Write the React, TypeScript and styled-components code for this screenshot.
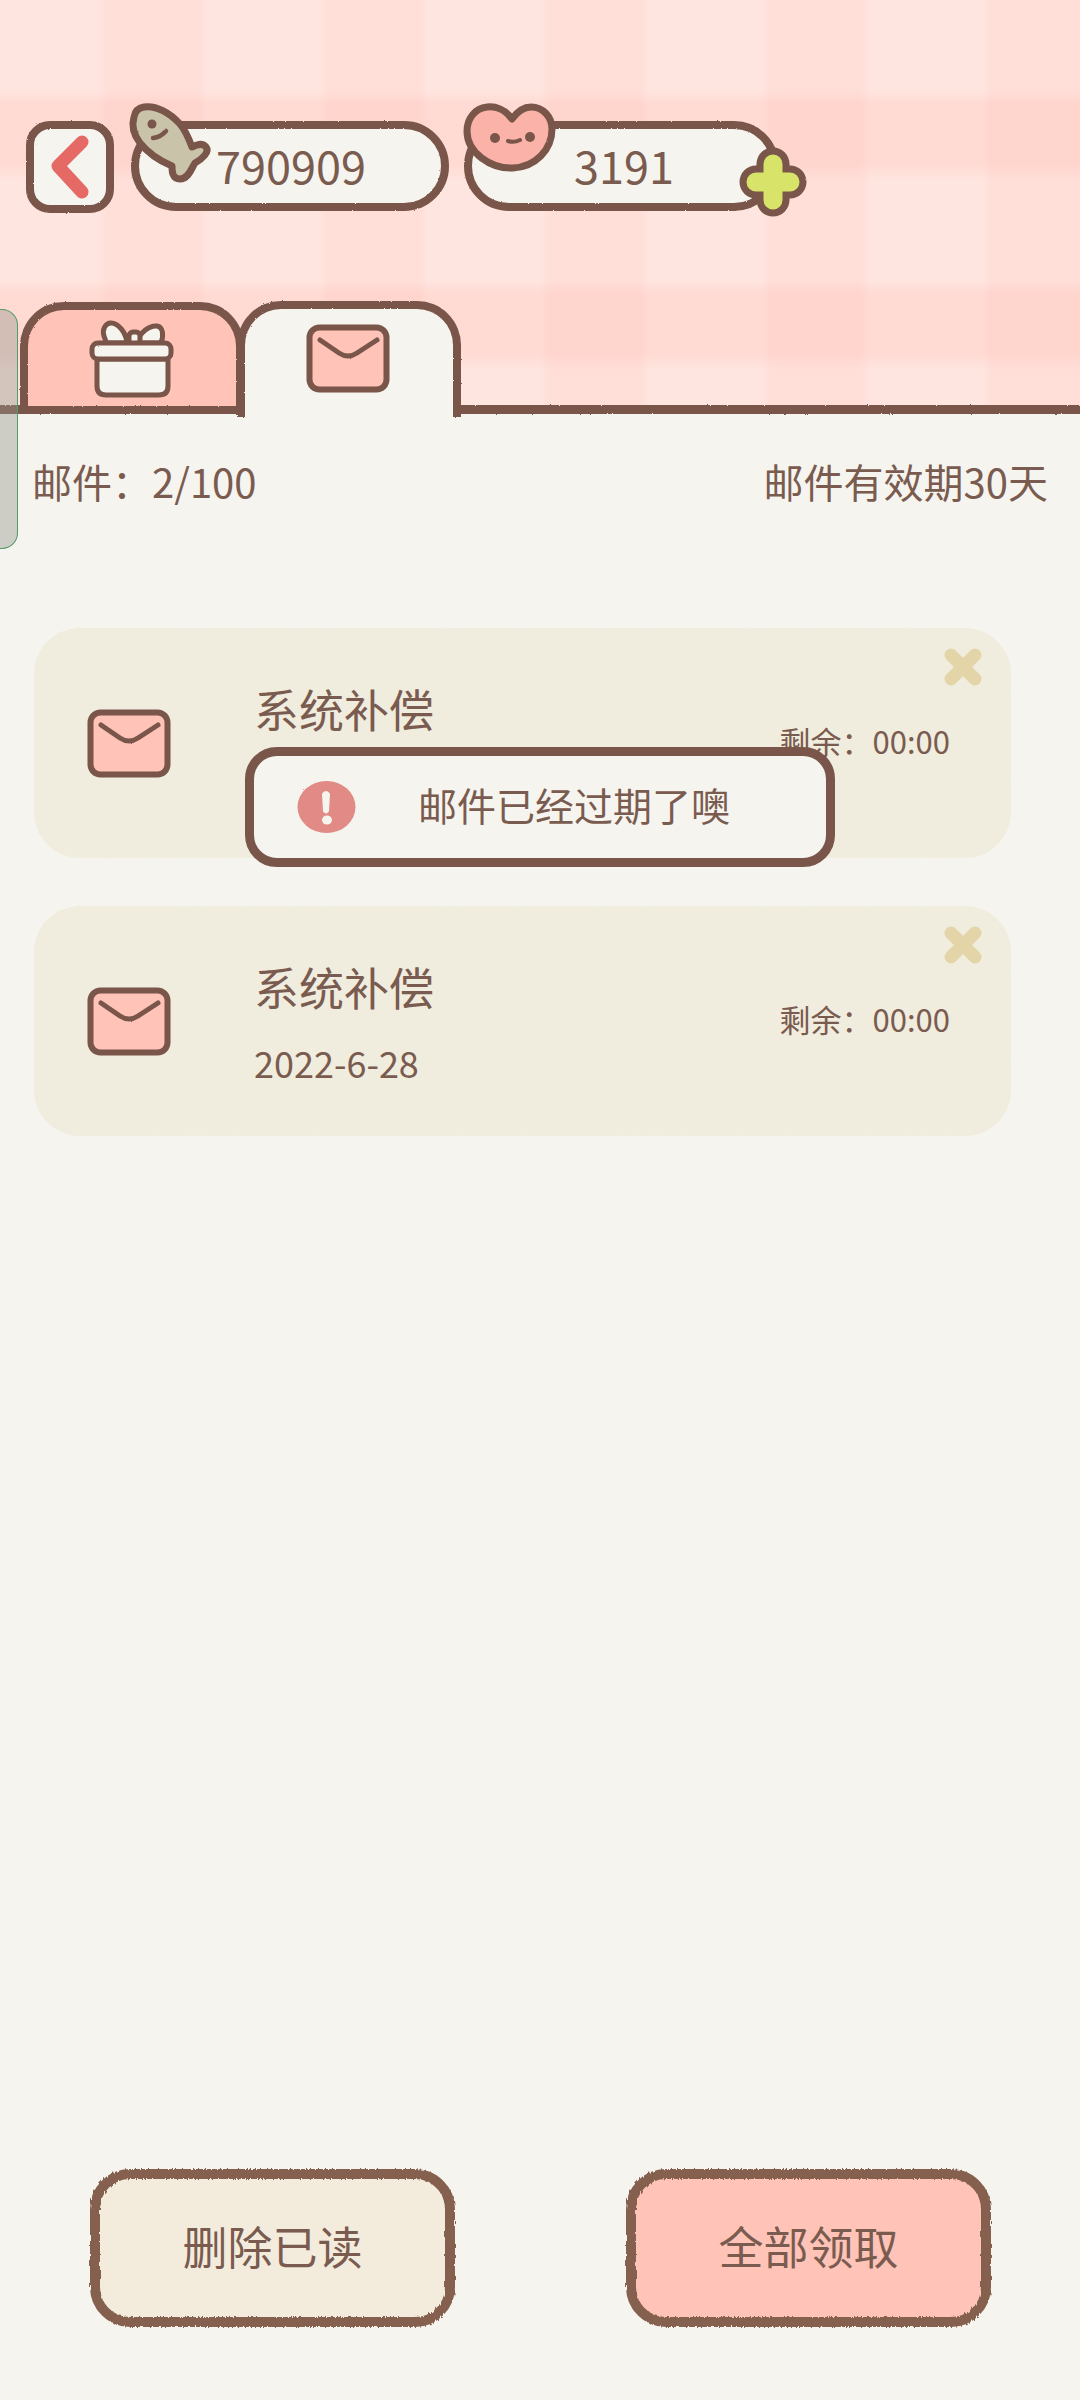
import React from "react";
import styled, { createGlobalStyle } from "styled-components";

const BROWN = "#7a5549";
const TEXT = "#7a5b4f";
const PAPER = "#f6f4ee";
const PINK = "#ffc3b8";

const Global = createGlobalStyle`
  html, body { margin: 0; padding: 0; background: ${PAPER}; }
  * { box-sizing: border-box; }
  #root { width: 1080px; height: 2400px; }
`;

const Page = styled.div`
  position: relative;
  width: 1080px;
  height: 2400px;
  display: flex;
  flex-direction: column;
  overflow: hidden;
  background: ${PAPER};
  color: ${TEXT};
  font-family: "Noto Sans CJK SC", "Noto Sans", sans-serif;
  font-weight: 400;
`;

const FilterDefs = styled.svg`
  position: absolute;
  width: 0;
  height: 0;
`;

const Header = styled.header`
  position: relative;
  height: 414px;
  flex: none;
  display: flex;
  flex-direction: column;
  padding-top: 121px;
  background-color: #ffe5df;
  background-image:
    linear-gradient(90deg, transparent 0, rgba(255, 165, 155, 0.1) 10px, rgba(255, 165, 155, 0.1) 100px, transparent 110px),
    linear-gradient(180deg, transparent 0, rgba(255, 165, 155, 0.16) 14px, rgba(255, 165, 155, 0.16) 74px, transparent 90px);
  background-size: 221px 100%, 100% 190px;
  background-position: 98px 0, 0 90px;
  &::after {
    content: "";
    position: absolute;
    left: -6px;
    right: -6px;
    bottom: 0;
    height: 9px;
    background: ${BROWN};
    filter: url(#rough);
  }
`;

const TopBar = styled.div`
  display: flex;
  align-items: flex-start;
  padding-left: 26px;
`;

const Outlined = styled.div`
  position: relative;
  isolation: isolate;
  &::before {
    content: "";
    position: absolute;
    inset: 0;
    z-index: -1;
    border: 8px solid ${BROWN};
    filter: url(#rough);
  }
`;

const BackButton = styled(Outlined)`
  width: 88px;
  height: 92px;
  display: flex;
  align-items: center;
  justify-content: center;
  &::before {
    background: ${PAPER};
    border-radius: 24px;
  }
`;

const Pill = styled(Outlined)<{ $width: number; $gap: number; $pad: number }>`
  width: ${(p) => p.$width}px;
  height: 90px;
  margin-left: ${(p) => p.$gap}px;
  padding-left: ${(p) => p.$pad}px;
  font-size: 45px;
  line-height: 88px;
  &::before {
    background: ${PAPER};
    border-radius: 46px;
  }
`;

const Badge = styled.svg<{ $left: number; $top: number }>`
  position: absolute;
  left: ${(p) => p.$left}px;
  top: ${(p) => p.$top}px;
  filter: url(#soft);
`;

const Tabs = styled.nav`
  position: relative;
  z-index: 1;
  height: 113px;
  margin-top: auto;
  padding-left: 20px;
  display: flex;
  align-items: flex-start;
`;

const Tab = styled(Outlined)<{ $active?: boolean }>`
  width: 224px;
  height: ${(p) => (p.$active ? 116 : 104)}px;
  margin-top: ${(p) => (p.$active ? 0 : 1)}px;
  margin-left: ${(p) => (p.$active ? -7 : 0)}px;
  padding-top: ${(p) => (p.$active ? 23 : 8)}px;
  padding-right: ${(p) => (p.$active ? 3 : 5)}px;
  display: flex;
  justify-content: center;
  &::before {
    background: ${(p) => (p.$active ? PAPER : PINK)};
    border-bottom: none;
    border-radius: 44px 44px 0 0;
  }
`;

const InfoRow = styled.div`
  display: flex;
  justify-content: space-between;
  padding: 37px 32px 0 32px;
  margin-bottom: 3px;
  font-size: 40px;
  line-height: 60px;
`;

const MailList = styled.section`
  display: flex;
  flex-direction: column;
  gap: 48px;
  margin-top: 114px;
  padding-left: 34px;
`;

const Card = styled.article`
  position: relative;
  isolation: isolate;
  width: 977px;
  height: 230px;
  display: flex;
  align-items: center;
  padding: 0 61px 0 53px;
  &::before {
    content: "";
    position: absolute;
    inset: 0;
    z-index: -1;
    background: #f0ecde;
    border-radius: 46px;
    filter: url(#rough);
  }
`;

const CardText = styled.div`
  display: flex;
  flex-direction: column;
  margin-left: 83px;
  align-self: flex-start;
  padding-top: 51px;
`;

const Title = styled.div`
  font-size: 45px;
  line-height: 60px;
`;

const DateLine = styled.div`
  margin-top: 20px;
  font-size: 36px;
  line-height: 50px;
`;

const Remain = styled.div`
  margin-left: auto;
  margin-bottom: 4px;
  font-size: 31px;
  line-height: 44px;
`;

const CloseIcon = styled.svg`
  position: absolute;
  top: 19px;
  right: 28px;
  filter: url(#soft);
`;

const Footer = styled.footer`
  margin-top: auto;
  display: flex;
  justify-content: space-between;
  padding: 0 89px 73px 90px;
`;

const ActionButton = styled.button<{ $pink?: boolean }>`
  position: relative;
  isolation: isolate;
  width: 365px;
  height: 158px;
  border: none;
  background: none;
  padding: 0 0 6px;
  color: ${TEXT};
  font-family: inherit;
  font-size: 45px;
  &::before {
    content: "";
    position: absolute;
    inset: 0;
    z-index: -1;
    border: 10px solid #86604f;
    border-radius: 40px;
    background: ${(p) => (p.$pink ? PINK : "#f3ecdd")};
    filter: url(#rough-heavy);
  }
`;

const Toast = styled.div`
  position: absolute;
  left: 245px;
  top: 747px;
  width: 590px;
  height: 120px;
  display: flex;
  align-items: center;
  gap: 62px;
  padding-left: 43px;
  background: ${PAPER};
  border: 9px solid ${BROWN};
  border-radius: 32px;
  font-size: 39px;
`;

const ToastText = styled.span`
  margin-bottom: 6px;
`;

const SideHandle = styled.div`
  position: absolute;
  left: 0;
  top: 309px;
  width: 18px;
  height: 240px;
  background: rgba(150, 150, 140, 0.42);
  border: 1px solid #4f9d68;
  border-left: none;
  border-radius: 0 16px 16px 0;
  z-index: 3;
`;

const MailIcon = () => (
  <svg width="84" height="69" viewBox="0 0 84 69" style={{ flex: "none", filter: "url(#soft)" }}>
    <rect x="3.5" y="3.5" width="77" height="62" rx="10" fill={PINK} stroke={BROWN} strokeWidth="6" />
    <path d="M14 16 L33 29 Q42 35 51 29 L71 16" fill="none" stroke={BROWN} strokeWidth="5" strokeLinecap="round" />
  </svg>
);

const GiftIcon = () => (
  <svg width="100" height="100" viewBox="0 0 100 100" style={{ filter: "url(#soft)" }}>
    <g fill={PAPER} stroke={BROWN} strokeWidth="5" strokeLinejoin="round">
      <path d="M47 33 C46 22 38 13 31 13 C25 13 22 20 24 26 C25 29 26 32 27 33 Z" />
      <path d="M56 33 C60 22 70 15 77 16 C83 17 84 25 81 33 Z" />
      <rect x="49" y="22" width="11" height="12" rx="4" />
      <path d="M17 49 H88 V76 Q88 85 79 85 H26 Q17 85 17 76 Z" />
      <rect x="12" y="33" width="79" height="16" rx="6" />
    </g>
  </svg>
);

const Mail = () => (
  <Card>
    <MailIcon />
    <CardText>
      <Title>系统补偿</Title>
      <DateLine>2022-6-28</DateLine>
    </CardText>
    <Remain>剩余：00:00</Remain>
    <CloseIcon width="40" height="40" viewBox="0 0 40 40">
      <path d="M8 8 L32 32 M32 8 L8 32" stroke="#e3d5a8" strokeWidth="13" strokeLinecap="round" />
    </CloseIcon>
  </Card>
);

export default function App() {
  return (
    <Page>
      <Global />
      <FilterDefs aria-hidden="true">
        <defs>
          <filter id="rough" x="-3%" y="-3%" width="106%" height="106%">
            <feTurbulence type="fractalNoise" baseFrequency="0.55" numOctaves="2" seed="4" />
            <feDisplacementMap in="SourceGraphic" scale="2" />
          </filter>
          <filter id="soft" x="-5%" y="-5%" width="110%" height="110%">
            <feTurbulence type="fractalNoise" baseFrequency="0.5" numOctaves="2" seed="9" />
            <feDisplacementMap in="SourceGraphic" scale="1.5" />
          </filter>
          <filter id="rough-heavy" x="-3%" y="-3%" width="106%" height="106%">
            <feTurbulence type="fractalNoise" baseFrequency="0.6 0.1" numOctaves="2" seed="7" />
            <feDisplacementMap in="SourceGraphic" scale="4" />
          </filter>
        </defs>
      </FilterDefs>

      <Header>
        <TopBar>
          <BackButton aria-label="返回">
            <svg width="44" height="66" viewBox="0 0 44 66" style={{ filter: "url(#soft)" }}>
              <path d="M34 8 L10 32 L34 58" fill="none" stroke="#e56a66" strokeWidth="13" strokeLinecap="round" strokeLinejoin="round" />
            </svg>
          </BackButton>
          <Pill $width={318} $gap={17} $pad={85}>
            790909
            <Badge $left={-11} $top={-26} width="110" height="100" viewBox="0 0 110 100">
              <path
                d="M24 12 C36 10 50 18 60 29 C66 36 69 44 72 52 C76 50 82 47 86 52 C90 57 82 64 75 68 C72 72 69 84 60 84 C52 84 52 76 52 71 C40 66 28 58 20 48 C14 40 11 32 14 22 C15 16 18 13 24 12 Z"
                fill="#c9c3aa"
                stroke={BROWN}
                strokeWidth="7"
                strokeLinejoin="round"
              />
              <circle cx="32" cy="29" r="4.5" fill={BROWN} />
              <path d="M33 43 Q41 42 46 36" fill="none" stroke={BROWN} strokeWidth="4.5" strokeLinecap="round" />
            </Badge>
          </Pill>
          <Pill $width={315} $gap={15} $pad={110}>
            3191
            <Badge $left={-9} $top={-26} width="110" height="85" viewBox="0 0 110 85">
              <path
                d="M57 24 C50 14 40 11 32 12 C20 13 12 24 12 36 C12 58 36 74 58 73 C80 72 97 55 97 34 C97 22 88 12 76 12 C68 12 62 17 57 24 Z"
                fill="#fbb2a8"
                stroke={BROWN}
                strokeWidth="7"
                strokeLinejoin="round"
              />
              <circle cx="40" cy="43" r="5" fill={BROWN} />
              <circle cx="75" cy="42" r="5" fill={BROWN} />
              <path d="M53 46 Q59 48 65 45" fill="none" stroke={BROWN} strokeWidth="4" strokeLinecap="round" />
            </Badge>
            <Badge $left={275} $top={26} width="68" height="70" viewBox="0 0 68 70">
              <path d="M17 35 H51 M34 17 V53" stroke={BROWN} strokeWidth="33" strokeLinecap="round" fill="none" />
              <path d="M17 35 H51 M34 17 V53" stroke="#d8e36a" strokeWidth="19" strokeLinecap="round" fill="none" />
            </Badge>
          </Pill>
        </TopBar>
        <Tabs>
          <Tab>
            <GiftIcon />
          </Tab>
          <Tab $active>
            <MailIcon />
          </Tab>
        </Tabs>
      </Header>

      <InfoRow>
        <span>邮件：2/100</span>
        <span>邮件有效期30天</span>
      </InfoRow>

      <MailList>
        <Mail />
        <Mail />
      </MailList>

      <Footer>
        <ActionButton>删除已读</ActionButton>
        <ActionButton $pink>全部领取</ActionButton>
      </Footer>

      <Toast>
        <svg width="59" height="52" viewBox="0 0 59 52" style={{ flex: "none", filter: "url(#soft)" }}>
          <ellipse cx="29.5" cy="26" rx="29" ry="26" fill="#e28a85" />
          <path d="M26 13 Q29 9 32 13 L31 30 Q29 33 27 30 Z" fill={PAPER} stroke={PAPER} strokeWidth="2" strokeLinejoin="round" />
          <ellipse cx="30" cy="39" rx="5" ry="4.5" fill={PAPER} />
        </svg>
        <ToastText>邮件已经过期了噢</ToastText>
      </Toast>

      <SideHandle />
    </Page>
  );
}
